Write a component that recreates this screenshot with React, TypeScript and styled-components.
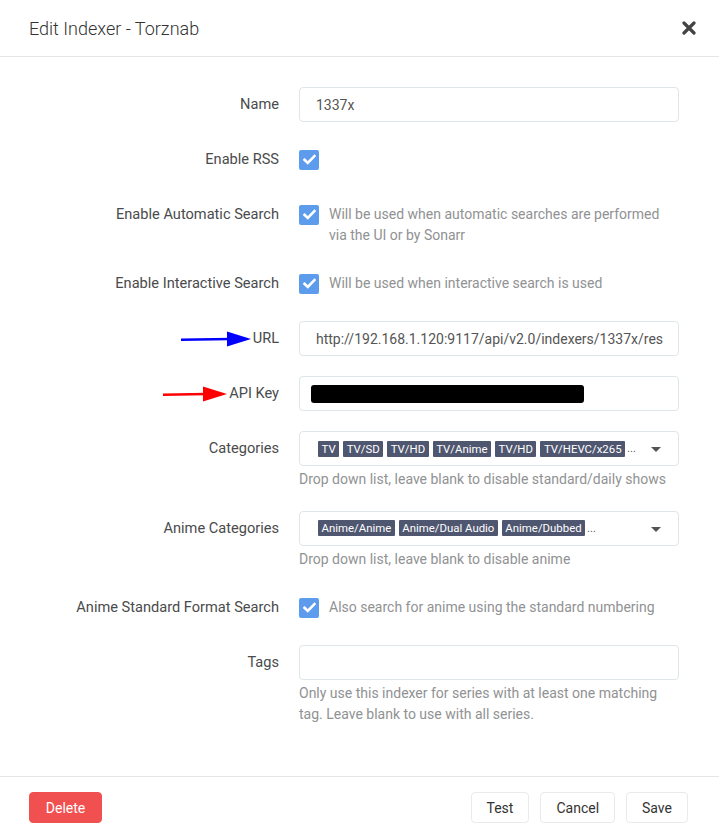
import React from "react";
import styled, { createGlobalStyle } from "styled-components";

const GlobalStyle = createGlobalStyle`
  html, body {
    margin: 0;
    padding: 0;
    background: #fff;
  }
  body {
    font-family: Roboto, "Open Sans", "Liberation Sans", sans-serif;
    font-size: 14px;
    color: #515253;
  }
  * {
    box-sizing: border-box;
  }
`;

const Modal = styled.div`
  width: 719px;
  height: 838px;
  display: flex;
  flex-direction: column;
  background: #fff;
`;

const Header = styled.div`
  position: relative;
  height: 57px;
  display: flex;
  align-items: center;
  padding: 0 50px 0 29px;
  border-bottom: 1px solid #e5e5e5;
  font-size: 18px;
  font-weight: 300;
  color: #333;
`;

const CloseButton = styled.button`
  position: absolute;
  right: 19px;
  top: 14px;
  width: 22px;
  height: 28px;
  padding: 0;
  border: none;
  background: transparent;
  display: flex;
  align-items: center;
  justify-content: center;
  cursor: pointer;
`;

const Body = styled.div`
  flex: 1;
  padding: 30px 40px 30px 30px;
`;

const FormGroup = styled.div`
  position: relative;
  display: flex;
  margin-bottom: 20px;
`;

const Label = styled.div`
  flex: 0 0 249px;
  margin-right: 20px;
  text-align: right;
  line-height: 35px;
  font-size: 14.6px;
  font-weight: 400;
  color: #4a4b4c;
`;

const Control = styled.div`
  flex: 0 0 380px;
  width: 380px;
  min-width: 0;
  display: flex;
  flex-direction: column;
`;

const TextInput = styled.div`
  height: 35px;
  padding: 0 16px;
  border: 1px solid #dde6e9;
  border-radius: 4px;
  display: flex;
  align-items: center;
  color: #555;
  white-space: nowrap;
  overflow: hidden;
`;

const UrlInput = styled(TextInput)`
  padding-right: 0;
`;

const Redacted = styled.div`
  width: 273px;
  height: 18px;
  margin-left: -5px;
  border-radius: 3px;
  background: #000;
`;

const SelectInput = styled(TextInput)`
  position: relative;
  padding: 0 40px 0 18px;
`;

const TagList = styled.div`
  display: flex;
  align-items: center;
  gap: 4px;
  overflow: hidden;
  white-space: nowrap;
`;

const Tag = styled.span`
  display: inline-block;
  height: 16px;
  line-height: 16px;
  padding: 0 3.5px;
  background: #4f566f;
  color: #fff;
  font-size: 11.4px;
  border-radius: 1px;
`;

const More = styled.span`
  margin-left: -2px;
  font-size: 11px;
  color: #555;
`;

const Caret = styled.span`
  position: absolute;
  right: 17px;
  top: 15px;
  width: 0;
  height: 0;
  border-left: 5px solid transparent;
  border-right: 5px solid transparent;
  border-top: 5px solid #555;
`;

const HelpText = styled.div`
  margin-top: 3px;
  padding-bottom: 1px;
  line-height: 20.5px;
  color: #909293;
`;

const CheckRow = styled.div`
  min-height: 35px;
  padding-top: 7.5px;
  display: flex;
  align-items: flex-start;
  gap: 10px;
`;

const CheckBox = styled.span`
  flex: 0 0 20px;
  width: 20px;
  height: 20px;
  border-radius: 2px;
  background: #5d9cec;
  display: flex;
  align-items: center;
  justify-content: center;
`;

const CheckHelp = styled.div`
  line-height: 21px;
  margin-top: -0.5px;
  color: #909293;
`;

const Arrow = styled.svg<{ $left: number }>`
  position: absolute;
  top: 10px;
  left: ${(p) => p.$left}px;
`;

const Footer = styled.div`
  height: 62px;
  padding: 0 31px 0 29px;
  border-top: 1px solid #e5e5e5;
  display: flex;
  align-items: center;
`;

const Spacer = styled.div`
  flex: 1;
`;

const Button = styled.button<{ $danger?: boolean }>`
  height: 31px;
  padding: 0 15px;
  margin-left: ${(p) => (p.$danger ? "0" : "11px")};
  min-width: ${(p) => (p.$danger ? "73px" : "0")};
  border: 1px solid ${(p) => (p.$danger ? "#f05050" : "#eaeaea")};
  border-radius: 4px;
  background: ${(p) => (p.$danger ? "#f05050" : "#fff")};
  color: ${(p) => (p.$danger ? "#fff" : "#333")};
  font-family: inherit;
  font-size: 14px;
  cursor: pointer;
`;

const Check = () => (
  <svg width="13" height="11" viewBox="0 0 13 11">
    <path d="M1.5 5.8 L4.8 9 L11.5 2" fill="none" stroke="#fff" strokeWidth="2.6" strokeLinecap="square" />
  </svg>
);

const CheckField: React.FC<{ label: string; help?: string }> = ({ label, help }) => (
  <FormGroup>
    <Label>{label}</Label>
    <Control>
      <CheckRow>
        <CheckBox>
          <Check />
        </CheckBox>
        {help && <CheckHelp>{help}</CheckHelp>}
      </CheckRow>
    </Control>
  </FormGroup>
);

const ArrowMark: React.FC<{ left: number; length: number; color: string }> = ({ left, length, color }) => (
  <Arrow $left={left} width={length} height="16" viewBox={`0 0 ${length} 16`}>
    <line x1="0" y1="8.8" x2={length - 20} y2="8" stroke={color} strokeWidth="2.5" />
    <polygon points={`${length - 24},0.5 ${length},8 ${length - 24},15.5`} fill={color} />
  </Arrow>
);

const categories = ["TV", "TV/SD", "TV/HD", "TV/Anime", "TV/HD", "TV/HEVC/x265"];
const animeCategories = ["Anime/Anime", "Anime/Dual Audio", "Anime/Dubbed"];

export default function App() {
  return (
    <>
      <GlobalStyle />
      <Modal>
        <Header>
          Edit Indexer - Torznab
          <CloseButton aria-label="Close">
            <svg width="14" height="14" viewBox="0 0 14 14">
              <path d="M2 2 L12 12 M12 2 L2 12" stroke="#444" strokeWidth="3.2" strokeLinecap="round" />
            </svg>
          </CloseButton>
        </Header>
        <Body>
          <FormGroup>
            <Label>Name</Label>
            <Control>
              <TextInput>1337x</TextInput>
            </Control>
          </FormGroup>

          <CheckField label="Enable RSS" />
          <CheckField
            label="Enable Automatic Search"
            help="Will be used when automatic searches are performed via the UI or by Sonarr"
          />
          <CheckField label="Enable Interactive Search" help="Will be used when interactive search is used" />

          <FormGroup>
            <ArrowMark left={151} length={70} color="#0000ff" />
            <Label>URL</Label>
            <Control>
              <UrlInput>http://192.168.1.120:9117/api/v2.0/indexers/1337x/res</UrlInput>
            </Control>
          </FormGroup>

          <FormGroup>
            <ArrowMark left={133} length={64} color="#ff0000" />
            <Label>API Key</Label>
            <Control>
              <TextInput>
                <Redacted />
              </TextInput>
            </Control>
          </FormGroup>

          <FormGroup>
            <Label>Categories</Label>
            <Control>
              <SelectInput>
                <TagList>
                  {categories.map((c, i) => (
                    <Tag key={i}>{c}</Tag>
                  ))}
                  <More>...</More>
                </TagList>
                <Caret />
              </SelectInput>
              <HelpText>Drop down list, leave blank to disable standard/daily shows</HelpText>
            </Control>
          </FormGroup>

          <FormGroup>
            <Label>Anime Categories</Label>
            <Control>
              <SelectInput>
                <TagList>
                  {animeCategories.map((c, i) => (
                    <Tag key={i}>{c}</Tag>
                  ))}
                  <More>...</More>
                </TagList>
                <Caret />
              </SelectInput>
              <HelpText>Drop down list, leave blank to disable anime</HelpText>
            </Control>
          </FormGroup>

          <CheckField
            label="Anime Standard Format Search"
            help="Also search for anime using the standard numbering"
          />

          <FormGroup>
            <Label>Tags</Label>
            <Control>
              <TextInput />
              <HelpText>
                Only use this indexer for series with at least one matching tag. Leave blank to use with all series.
              </HelpText>
            </Control>
          </FormGroup>
        </Body>
        <Footer>
          <Button $danger>Delete</Button>
          <Spacer />
          <Button>Test</Button>
          <Button>Cancel</Button>
          <Button>Save</Button>
        </Footer>
      </Modal>
    </>
  );
}
